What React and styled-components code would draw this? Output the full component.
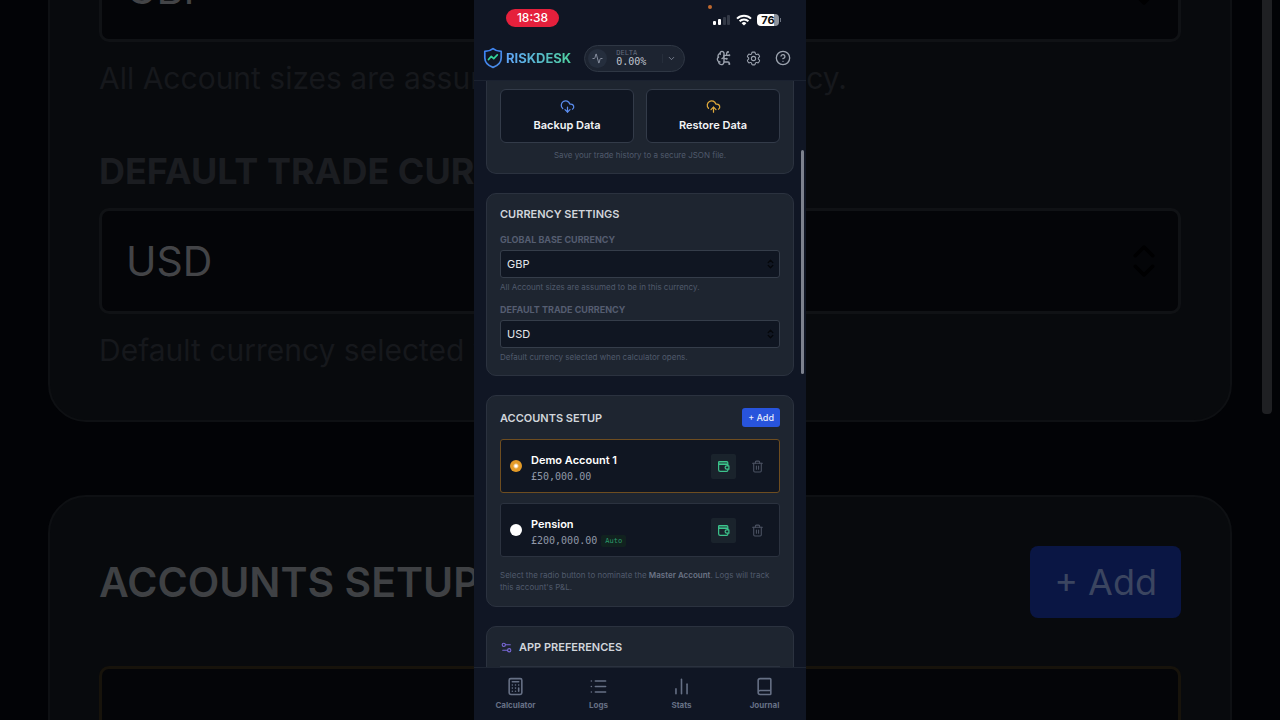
import React, { useState } from "react";
import styled, { createGlobalStyle } from "styled-components";
import { HiOutlineCog6Tooth } from "react-icons/hi2";
import {
  Activity,
  Book,
  BrainCircuit,
  Calculator,
  ChartNoAxesColumn,
  ChevronDown,
  ChevronsUpDown,
  CircleQuestionMark,
  CloudDownload,
  CloudUpload,
  List,
  Settings2,
  Trash2,
} from "lucide-react";

const currencies = ["GBP", "USD", "EUR"];

const initialAccounts = [
  { id: 1, name: "Demo Account 1", balance: "£50,000.00", auto: false },
  { id: 2, name: "Pension", balance: "£200,000.00", auto: true },
];

const tabs = [
  { label: "Calculator", icon: Calculator },
  { label: "Logs", icon: List },
  { label: "Stats", icon: ChartNoAxesColumn },
  { label: "Journal", icon: Book },
];

function StatusBar() {
  return (
    <StatusRow>
      <Clock>18:38</Clock>
      <StatusIcons>
        <RecordingDot />
        <svg width="18" height="10" viewBox="0 0 18 10">
          <rect x="0" y="6" width="3" height="4" rx="1" fill="#fff" />
          <rect x="5" y="4" width="3" height="6" rx="1" fill="#fff" />
          <rect x="10" y="2" width="3" height="8" rx="1" fill="#343a47" />
          <rect x="14" y="0" width="3" height="10" rx="1" fill="#343a47" />
        </svg>
        <svg width="16" height="12" viewBox="0 0 16 12" fill="none" stroke="#fff" strokeWidth="2">
          <path d="M1 4.600a10 10 0 0 1 14 0" />
          <path d="M3.600 7.300a6.200 6.200 0 0 1 8.800 0" />
          <path d="M8 11.600 5.600 9.200a3.400 3.400 0 0 1 4.800 0z" fill="#fff" stroke="none" />
        </svg>
        <Battery>
          <BatteryLevel>76</BatteryLevel>
          <BatteryTip />
        </Battery>
      </StatusIcons>
    </StatusRow>
  );
}

function Logo() {
  return (
    <svg width="20" height="22" viewBox="0 0 20 22" fill="none" strokeLinecap="round" strokeLinejoin="round">
      <defs>
        <linearGradient id="shield" x1="0" y1="0" x2="1" y2="1">
          <stop offset="0" stopColor="#3b82f6" />
          <stop offset="1" stopColor="#4c8be0" />
        </linearGradient>
      </defs>
      <path
        d="M10 1.600c2.200 1.800 5 2.700 8.200 2.800v6.400c0 4.600-3.200 7.800-8.200 9.600-5-1.800-8.200-5-8.200-9.600V4.400C5 4.300 7.800 3.400 10 1.600z"
        stroke="url(#shield)"
        strokeWidth="1.700"
      />
      <path d="m5.500 12.500 2.800-3.100 2.400 2.200 3.600-3.800" stroke="#34d399" strokeWidth="1.700" />
    </svg>
  );
}

function WalletIcon() {
  return (
    <svg width="13" height="13" viewBox="0 0 24 24" fill="none" stroke="currentColor" strokeWidth="2.200">
      <path d="M4 3h14a2 2 0 0 1 2 2v3H3V4a1 1 0 0 1 1-1z" fill="currentColor" fillOpacity="0.350" />
      <path d="M3 5v13a3 3 0 0 0 3 3h12a2 2 0 0 0 2-2v-2" />
      <path d="M3 8h15a2 2 0 0 1 2 2v1" />
      <path d="M22 11h-4a3 3 0 0 0 0 6h4z" strokeLinejoin="round" />
    </svg>
  );
}

function CurrencyField({ id, label, value, hint }) {
  const [currency, setCurrency] = useState(value);

  return (
    <Field>
      <Label htmlFor={id}>{label}</Label>
      <SelectWrap>
        <Select id={id} value={currency} onChange={(e) => setCurrency(e.target.value)}>
          {currencies.map((c) => (
            <option key={c}>{c}</option>
          ))}
        </Select>
        <ChevronsUpDown size={11} strokeWidth={3} />
      </SelectWrap>
      <Hint>{hint}</Hint>
    </Field>
  );
}

// Enlarged, dimmed copy of the settings page that sits behind the phone
function Backdrop() {
  return (
    <BackdropLayer aria-hidden="true">
      <BigCard>
        <BigSelectWrap>
          <BigSelect defaultValue="GBP" tabIndex={-1} aria-label="Global Base Currency">
            <option>GBP</option>
          </BigSelect>
          <ChevronsUpDown size={42} strokeWidth={2} />
        </BigSelectWrap>
        <BigHint>All Account sizes are assumed to be in this currency.</BigHint>
        <BigLabel htmlFor="bigTradeCurrency">Default Trade Currency</BigLabel>
        <BigSelectWrap>
          <BigSelect id="bigTradeCurrency" defaultValue="USD" tabIndex={-1}>
            <option>USD</option>
          </BigSelect>
          <ChevronsUpDown size={42} strokeWidth={2} />
        </BigSelectWrap>
        <BigHint>Default currency selected when calculator opens.</BigHint>
      </BigCard>
      <BigCard>
        <BigCardHead>
          <BigTitle>Accounts Setup</BigTitle>
          <BigAdd type="button" tabIndex={-1}>+ Add</BigAdd>
        </BigCardHead>
        <BigAccount />
      </BigCard>
      <BigScrollThumb />
    </BackdropLayer>
  );
}

function App() {
  const [master, setMaster] = useState(1);

  return (
    <Page>
      <GlobalStyle />
      <Backdrop />
      <Phone>
        <StatusBar />
        <Header>
          <Brand href="#">
            <Logo />
            <BrandName>RISKDESK</BrandName>
          </Brand>
          <DeltaButton type="button">
            <DeltaIcon>
              <Activity size={11} />
            </DeltaIcon>
            <DeltaText>
              <DeltaLabel>DELTA</DeltaLabel>
              <DeltaValue>0.00%</DeltaValue>
            </DeltaText>
            <DeltaArrow>
              <ChevronDown size={9} />
            </DeltaArrow>
          </DeltaButton>
          <HeaderActions>
            <IconButton type="button" aria-label="AI coach">
              <BrainCircuit size={16} />
            </IconButton>
            <IconButton type="button" aria-label="Settings">
              <HiOutlineCog6Tooth size={17} />
            </IconButton>
            <IconButton type="button" aria-label="Help">
              <CircleQuestionMark size={16} />
            </IconButton>
          </HeaderActions>
        </Header>

        <Main>
          <TopCard>
            <DataButtons>
              <DataButton type="button" $color="#5b8def">
                <CloudDownload size={15} />
                Backup Data
              </DataButton>
              <DataButton type="button" $color="#e0a93b">
                <CloudUpload size={15} />
                Restore Data
              </DataButton>
            </DataButtons>
            <CenteredHint>Save your trade history to a secure JSON file.</CenteredHint>
          </TopCard>

          <Card>
            <Title>Currency Settings</Title>
            <CurrencyField
              id="baseCurrency"
              label="Global Base Currency"
              value="GBP"
              hint="All Account sizes are assumed to be in this currency."
            />
            <CurrencyField
              id="tradeCurrency"
              label="Default Trade Currency"
              value="USD"
              hint="Default currency selected when calculator opens."
            />
          </Card>

          <Card>
            <CardHead>
              <Title>Accounts Setup</Title>
              <AddButton type="button">+ Add</AddButton>
            </CardHead>
            <AccountList>
              {initialAccounts.map((account) => (
                <Account key={account.id} $active={master === account.id}>
                  <Radio
                    type="radio"
                    name="master"
                    id={`account-${account.id}`}
                    checked={master === account.id}
                    onChange={() => setMaster(account.id)}
                  />
                  <AccountInfo>
                    <AccountName htmlFor={`account-${account.id}`}>{account.name}</AccountName>
                    <Balance>
                      {account.balance}
                      {account.auto && <AutoTag>Auto</AutoTag>}
                    </Balance>
                  </AccountInfo>
                  <WalletButton type="button" aria-label={`${account.name} funds`}>
                    <WalletIcon />
                  </WalletButton>
                  <DeleteButton type="button" aria-label={`Delete ${account.name}`}>
                    <Trash2 size={13} />
                  </DeleteButton>
                </Account>
              ))}
            </AccountList>
            <Note>
              Select the radio button to nominate the <strong>Master Account</strong>. Logs will track this
              account's P&amp;L.
            </Note>
          </Card>

          <Card>
            <PreferencesHead>
              <Settings2 size={13} />
              <Title>App Preferences</Title>
            </PreferencesHead>
          </Card>
          <ScrollThumb />
        </Main>

        <TabBar>
          {tabs.map(({ label, icon: Icon }) => (
            <Tab href="#" key={label}>
              <Icon size={19} strokeWidth={2} />
              {label}
            </Tab>
          ))}
        </TabBar>
      </Phone>
    </Page>
  );
}

export default App;

const GlobalStyle = createGlobalStyle`
  * {
    box-sizing: border-box;
  }
  body {
    margin: 0;
    background: #020306;
    font-family: Inter, "Liberation Sans", sans-serif;
  }
  button, select {
    font-family: inherit;
  }
  svg {
    display: block;
    flex-shrink: 0;
  }
`;

const Page = styled.div`
  position: relative;
  height: 100vh;
  overflow: hidden;
`;

const Phone = styled.div`
  position: relative;
  display: flex;
  flex-direction: column;
  width: 100%;
  max-width: 332px;
  height: 100%;
  margin: 0 auto;
  background: #101624;
  color: #e5e7eb;
`;

/* status bar */

const StatusRow = styled.div`
  display: flex;
  align-items: center;
  justify-content: space-between;
  height: 36px;
  padding: 0 25px 0 32px;
`;

const Clock = styled.div`
  width: 53px;
  border-radius: 9px;
  background: #e5203c;
  color: #fff;
  font-size: 12px;
  font-weight: 500;
  line-height: 18px;
  text-align: center;
`;

const StatusIcons = styled.div`
  position: relative;
  display: flex;
  align-items: center;
  gap: 5px;
  padding-top: 4px;
`;

const RecordingDot = styled.span`
  position: absolute;
  top: -5px;
  left: -5px;
  width: 4px;
  height: 4px;
  border-radius: 50%;
  background: #c0692f;
`;

const Battery = styled.div`
  display: flex;
  align-items: center;
  gap: 1px;
`;

const BatteryLevel = styled.div`
  width: 22px;
  border-radius: 4px;
  background: linear-gradient(90deg, #fff 78%, #8f939b 78%);
  color: #111;
  font-size: 11px;
  font-weight: 700;
  line-height: 12px;
  text-align: center;
`;

const BatteryTip = styled.div`
  width: 1px;
  height: 4px;
  background: #6b7280;
`;

/* header */

const Header = styled.header`
  display: flex;
  align-items: center;
  height: 45px;
  padding: 0 15px 0 9px;
  border-bottom: 1px solid #1b2230;
`;

const Brand = styled.a`
  display: flex;
  align-items: center;
  gap: 3px;
  text-decoration: none;
`;

const BrandName = styled.span`
  background: linear-gradient(90deg, #60a5fa, #4fcf9f);
  background-clip: text;
  color: transparent;
  font-size: 13px;
  font-weight: 700;
  line-height: 18px;
`;

const DeltaButton = styled.button`
  display: flex;
  align-items: center;
  width: 101px;
  height: 27px;
  margin-left: 13px;
  padding: 0 8px 0 3px;
  border: 1px solid #2f3744;
  border-radius: 14px;
  background: #1d2431;
  color: #8d95a5;
`;

const DeltaIcon = styled.span`
  display: grid;
  place-items: center;
  width: 19px;
  height: 19px;
  border-radius: 50%;
  background: #252e3d;
`;

const DeltaText = styled.span`
  display: flex;
  flex: 1;
  flex-direction: column;
  margin-left: 9px;
  font-family: "DejaVu Sans Mono", "Liberation Mono", monospace;
  text-align: left;
`;

const DeltaLabel = styled.span`
  color: #626a7a;
  font-size: 7px;
  line-height: 7px;
`;

const DeltaValue = styled.span`
  color: #c0c5cf;
  font-size: 10px;
  line-height: 9px;
`;

const DeltaArrow = styled.span`
  padding-left: 4px;
  border-left: 1px solid #262e3b;
`;

const HeaderActions = styled.div`
  display: flex;
  align-items: center;
  gap: 13px;
  margin-left: auto;
`;

const IconButton = styled.button`
  padding: 0;
  border: 0;
  background: none;
  color: #9ca3af;
`;

/* cards */

const Main = styled.main`
  position: relative;
  display: flex;
  flex: 1;
  flex-direction: column;
  gap: 19px;
  min-height: 0;
  padding: 0 12px;
  overflow: hidden;
`;

const Card = styled.section`
  flex-shrink: 0;
  padding: 12px 13px 13px;
  border: 1px solid #2b323f;
  border-radius: 10px;
  background: #1e2530;
`;

const TopCard = styled(Card)`
  padding-top: 8px;
  border-top: 0;
  border-radius: 0 0 10px 10px;
`;

const DataButtons = styled.div`
  display: grid;
  grid-template-columns: 1fr 1fr;
  gap: 12px;
`;

const DataButton = styled.button`
  display: flex;
  flex-direction: column;
  align-items: center;
  gap: 3px;
  height: 54px;
  padding: 9px 0;
  border: 1px solid #333b49;
  border-radius: 6px;
  background: #101622;
  color: #f3f4f6;
  font-size: 11px;
  font-weight: 600;
  line-height: 16px;

  svg {
    color: ${(props) => props.$color};
  }
`;

const Title = styled.h2`
  margin: 0;
  color: #d1d5db;
  font-size: 11px;
  font-weight: 600;
  line-height: 16px;
  text-transform: uppercase;
`;

const Field = styled.div`
  display: flex;
  flex-direction: column;
  gap: 4px;
  margin-top: 12px;
`;

const Label = styled.label`
  color: #555d70;
  font-size: 9px;
  font-weight: 700;
  line-height: 12px;
  text-transform: uppercase;
`;

const SelectWrap = styled.div`
  position: relative;
  color: #05070b;

  svg {
    position: absolute;
    top: 50%;
    right: 4px;
    transform: translateY(-50%);
    pointer-events: none;
  }
`;

const Select = styled.select`
  appearance: none;
  display: block;
  width: 100%;
  height: 28px;
  padding: 0 6px;
  border: 1px solid #353d4a;
  border-radius: 3px;
  background: #101622;
  color: #e5e7eb;
  font-size: 11px;
`;

const Hint = styled.p`
  margin: 0;
  color: #505a6c;
  font-size: 8px;
  line-height: 10px;
`;

const CenteredHint = styled(Hint)`
  margin-top: 7px;
  text-align: center;
`;

const Note = styled(Hint)`
  margin-top: 12px;
  line-height: 12px;

  strong {
    color: #6b7385;
    font-weight: 600;
  }
`;

const CardHead = styled.div`
  display: flex;
  align-items: center;
  justify-content: space-between;
`;

const AddButton = styled.button`
  height: 19px;
  padding: 0 6px;
  border: 0;
  border-radius: 3px;
  background: #2854dc;
  color: #e8edfb;
  font-size: 9px;
  font-weight: 500;
`;

const AccountList = styled.div`
  display: flex;
  flex-direction: column;
  gap: 10px;
  margin-top: 12px;
`;

const Account = styled.div`
  display: flex;
  align-items: center;
  height: 54px;
  padding: 0 9px;
  border: 1px solid ${(props) => (props.$active ? "#6e4d20" : "#2b323f")};
  border-radius: 3px;
  background: #101622;
`;

const Radio = styled.input`
  appearance: none;
  width: 12px;
  height: 12px;
  margin: 0;
  border-radius: 50%;
  background: #fff;

  &:checked {
    background: radial-gradient(circle, #fff 1px, #e39a27 3px);
  }
`;

const AccountInfo = styled.div`
  display: flex;
  flex: 1;
  flex-direction: column;
  gap: 2px;
  margin-left: 9px;
  padding-top: 3px;
`;

const AccountName = styled.label`
  color: #fff;
  font-size: 11px;
  font-weight: 600;
  line-height: 16px;
`;

const Balance = styled.div`
  display: flex;
  align-items: center;
  gap: 4px;
  color: #9098a8;
  font-family: "DejaVu Sans Mono", "Liberation Mono", monospace;
  font-size: 10px;
  line-height: 14px;
`;

const AutoTag = styled.span`
  padding: 0 4px;
  border-radius: 2px;
  background: #11221f;
  color: #2c9a6c;
  font-size: 7px;
  line-height: 12px;
`;

const WalletButton = styled.button`
  display: grid;
  place-items: center;
  width: 25px;
  height: 25px;
  padding: 0;
  border: 0;
  border-radius: 2px;
  background: #1a232c;
  color: #3cc48c;
`;

const DeleteButton = styled(WalletButton)`
  margin-left: 9px;
  background: none;
  color: #4b5262;
`;

const PreferencesHead = styled.div`
  display: flex;
  align-items: center;
  gap: 6px;
  padding-bottom: 11px;
  border-bottom: 1px solid #2b323f;

  svg {
    color: #7a68d8;
  }
`;

const ScrollThumb = styled.div`
  position: absolute;
  top: 69px;
  right: 2px;
  width: 3px;
  height: 224px;
  border-radius: 2px;
  background: #7d828e;
`;

/* bottom tabs */

const TabBar = styled.nav`
  display: grid;
  grid-template-columns: repeat(4, 1fr);
  height: 53px;
  border-top: 1px solid #1f2633;
`;

const Tab = styled.a`
  display: flex;
  flex-direction: column;
  align-items: center;
  gap: 4px;
  padding-top: 9px;
  color: #667085;
  font-size: 8px;
  font-weight: 700;
  line-height: 10px;
  text-decoration: none;
`;

/* backdrop */

const BackdropLayer = styled.div`
  position: absolute;
  inset: 0;
  padding: 0 48px;
  overflow: hidden;
  background: #020306;
`;

const BigCard = styled.div`
  padding: 49px 49px 52px;
  border: 2px solid #0e1013;
  border-radius: 38px;
  background: #080a0d;

  &:first-child {
    margin-top: -115px;
  }

  & + & {
    margin-top: 73px;
  }
`;

const BigSelectWrap = styled(SelectWrap)`
  color: #000001;

  svg {
    right: 16px;
  }
`;

const BigSelect = styled(Select)`
  height: 106px;
  padding: 0 24px;
  border: 3px solid #101215;
  border-radius: 10px;
  background: #040508;
  color: #434447;
  font-size: 41px;
`;

const BigHint = styled(Hint)`
  margin-top: 18px;
  color: #16181c;
  font-size: 30px;
  line-height: 36px;
`;

const BigLabel = styled(Label)`
  display: block;
  margin: 55px 0 17px;
  color: #1b1d21;
  font-size: 36px;
  line-height: 40px;
`;

const BigCardHead = styled(CardHead)`
  height: 72px;
`;

const BigTitle = styled(Title)`
  color: #3f4144;
  font-size: 41px;
  line-height: 48px;
`;

const BigAdd = styled(AddButton)`
  height: 72px;
  padding: 0 24px;
  border-radius: 8px;
  background: #0a1644;
  color: #3b4560;
  font-size: 36px;
  font-weight: 400;
`;

const BigAccount = styled.div`
  height: 208px;
  margin-top: 48px;
  border: 3px solid #17130b;
  border-radius: 10px;
  background: #040508;
`;

const BigScrollThumb = styled.div`
  position: absolute;
  top: 0;
  right: 8px;
  width: 10px;
  height: 414px;
  border-radius: 0 0 4px 4px;
  background: #1f2023;
`;
